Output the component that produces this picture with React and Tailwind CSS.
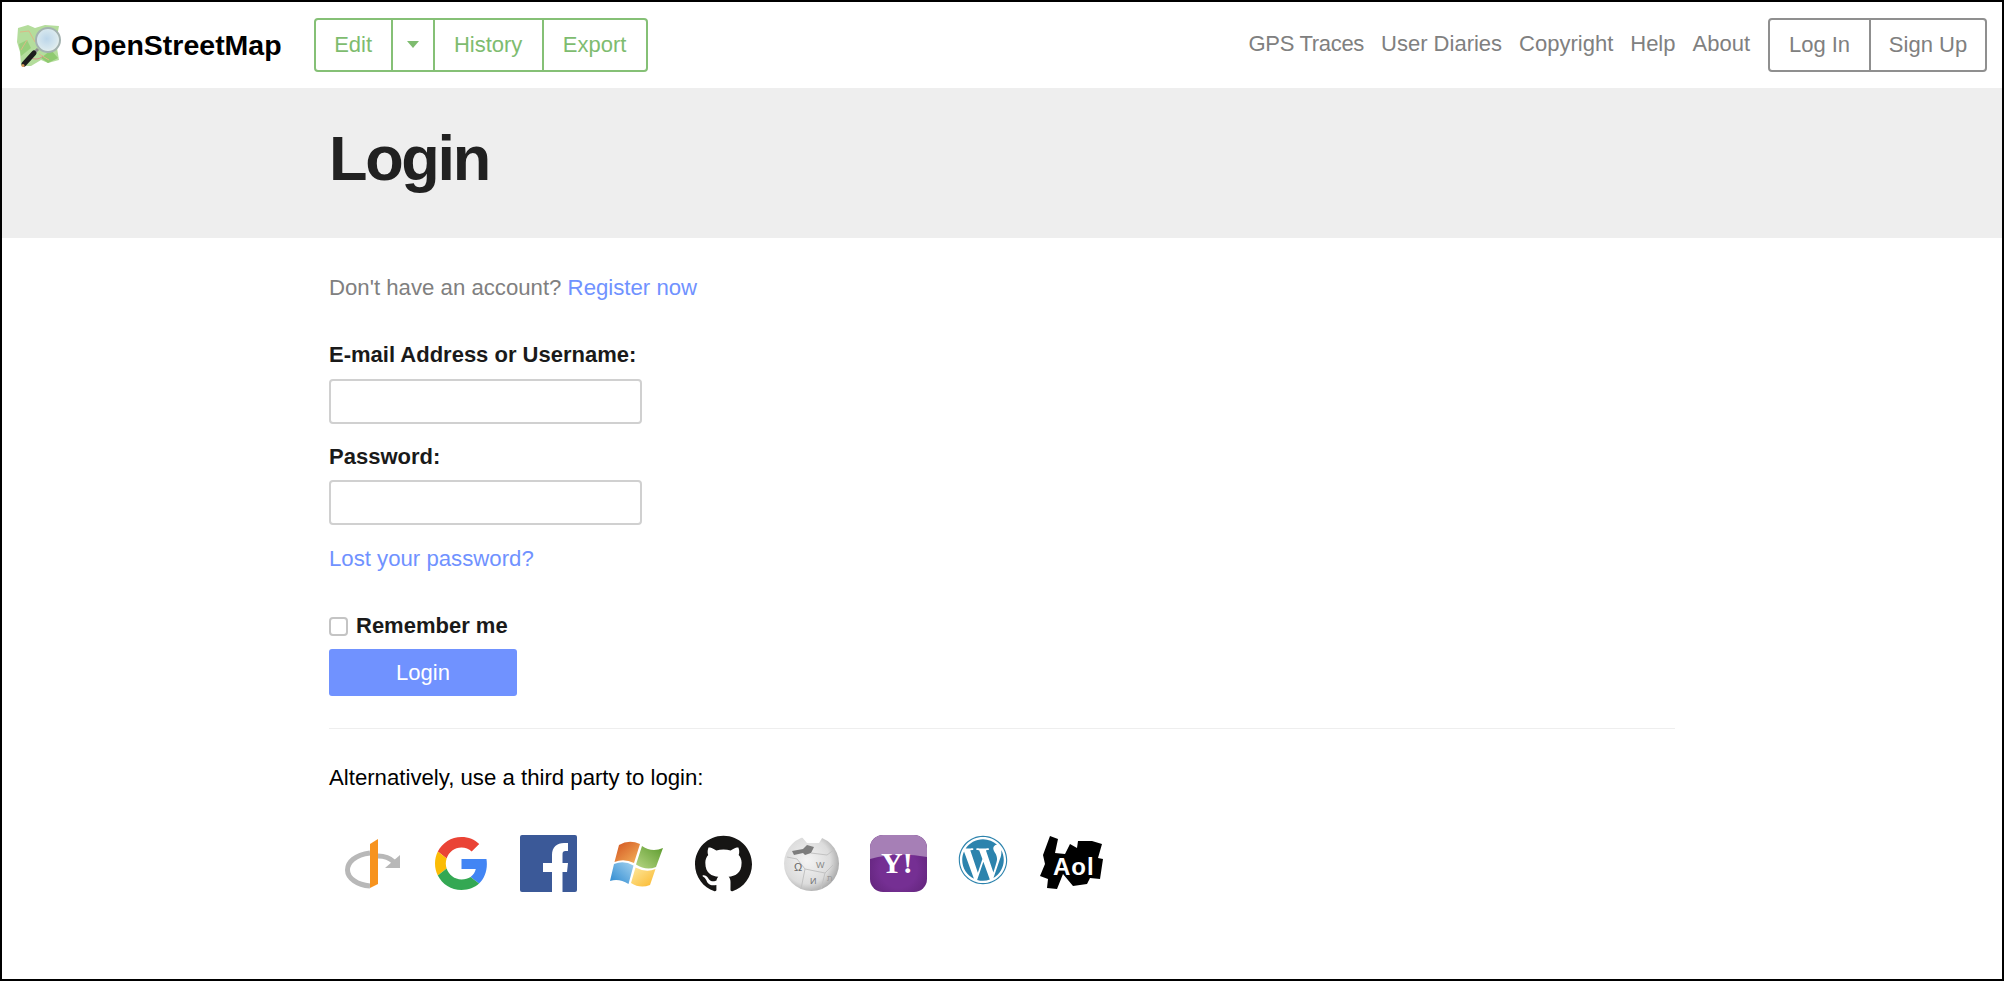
import { SiGithub } from 'react-icons/si';
import { FaWordpress } from 'react-icons/fa';

const font = { fontFamily: '"Liberation Sans", Arial, sans-serif' };

const OsmLogo = () => (
  <svg width="46" height="46" viewBox="0 0 46 46">
    <defs>
      <radialGradient id="lens" cx="45%" cy="45%" r="60%">
        <stop offset="0%" stopColor="#bcd6ea" />
        <stop offset="70%" stopColor="#d8e8ee" />
        <stop offset="100%" stopColor="#eef4ee" />
      </radialGradient>
    </defs>
    <path d="M3 6 L13 3 L20 6 L30 3 L44 4 L41 20 L44 38 L33 41 L26 38 L16 44 L6 44 L5 30 L2 20 Z" fill="#b4dd9c" />
    <path d="M4 22 L12 18 L16 26 L6 34 Z" fill="#98cf7c" />
    <path d="M26 36 L36 28 L43 36 L33 41 Z" fill="#8fca70" />
    <path d="M5 10 L14 9 L20 20 M12 18 L6 28 M24 32 L34 38" fill="none" stroke="#dcb887" strokeWidth="1" />
    <path d="M14 34 C18 38 24 38 28 34" fill="none" stroke="#d98f8f" strokeWidth="1" />
    <circle cx="33" cy="18" r="12" fill="url(#lens)" stroke="#a3b2b0" strokeWidth="2" />
    <path d="M23 27 L20 30" stroke="#8a8a8a" strokeWidth="3" />
    <path d="M19 31 L9 42" stroke="#1c1c1c" strokeWidth="5" strokeLinecap="round" />
    <circle cx="8" cy="43.5" r="1.5" fill="#d9985a" />
  </svg>
);

const OpenIdIcon = () => (
  <svg width="57" height="57" viewBox="0 0 57 57">
    <path d="M25 18 C10 20 2.5 27 2.5 35 C2.5 43 12 50 25 51" fill="none" stroke="#b8b8b8" strokeWidth="5" />
    <path d="M33 21 C40 21 45 23 49 27" fill="none" stroke="#b8b8b8" strokeWidth="5" />
    <path d="M40 33 L55 33 L55 20 Z" fill="#b8b8b8" />
    <path d="M25 9 L33 4 L33 49 L25 53 Z" fill="#f7931e" />
  </svg>
);

const GoogleIcon = () => (
  <svg width="53" height="53" viewBox="0 0 48 48" className="mt-[2px] ml-[2px]">
    <path fill="#EA4335" d="M24 9.5c3.54 0 6.71 1.22 9.21 3.6l6.85-6.85C35.9 2.38 30.47 0 24 0 14.62 0 6.51 5.38 2.56 13.22l7.98 6.19C12.43 13.72 17.74 9.5 24 9.5z" />
    <path fill="#4285F4" d="M46.98 24.55c0-1.57-.15-3.09-.38-4.55H24v9.02h12.94c-.58 2.96-2.26 5.48-4.78 7.18l7.73 6c4.51-4.18 7.09-10.36 7.09-17.65z" />
    <path fill="#FBBC05" d="M10.53 28.59c-.48-1.45-.76-2.99-.76-4.59s.27-3.14.76-4.59l-7.98-6.19C.92 16.46 0 20.12 0 24c0 3.88.92 7.54 2.56 10.78l7.97-6.19z" />
    <path fill="#34A853" d="M24 48c6.48 0 11.93-2.13 15.89-5.81l-7.73-6c-2.15 1.45-4.92 2.3-8.16 2.3-6.26 0-11.57-4.22-13.47-9.91l-7.98 6.19C6.51 42.62 14.62 48 24 48z" />
  </svg>
);

const FacebookIcon = () => (
  <svg width="57" height="57" viewBox="0 0 57 57">
    <rect width="57" height="57" rx="2" fill="#3b5998" />
    <path d="M32 57 V37 H23 V28 H32 V20 C32 12 37 8 44 8 H48 V16 H45.5 C43 16 42.5 17 42.5 20 V28 H48 L47 37 H42.5 V57 Z" fill="#fff" />
  </svg>
);

const WindowsIcon = () => (
  <svg width="57" height="57" viewBox="0 0 57 57">
    <defs>
      <linearGradient id="winOrange" x1="0" y1="0" x2="1" y2="1">
        <stop offset="0%" stopColor="#d2521f" />
        <stop offset="100%" stopColor="#f4b45c" />
      </linearGradient>
      <linearGradient id="winGreen" x1="1" y1="0" x2="0" y2="1">
        <stop offset="0%" stopColor="#5b9a2c" />
        <stop offset="100%" stopColor="#b7d684" />
      </linearGradient>
      <linearGradient id="winBlue" x1="0" y1="1" x2="1" y2="0">
        <stop offset="0%" stopColor="#2a88d0" />
        <stop offset="100%" stopColor="#a3d2ef" />
      </linearGradient>
      <linearGradient id="winYellow" x1="1" y1="1" x2="0" y2="0">
        <stop offset="0%" stopColor="#fbb82c" />
        <stop offset="100%" stopColor="#fde9a0" />
      </linearGradient>
    </defs>
    <path d="M11 10 Q21 4 32 9 L26 28 Q16 23 6.5 27 Z" fill="url(#winOrange)" />
    <path d="M34 11 Q44 18 55 13 L48 32 Q38 36 28 29.5 Z" fill="url(#winGreen)" />
    <path d="M6 29 Q16 25 25.5 30.5 L20.5 49 Q11 43 2 46 Z" fill="url(#winBlue)" />
    <path d="M27.5 32.5 Q38 38 47.5 34 L42 50 Q32 54 23 48 Z" fill="url(#winYellow)" />
  </svg>
);

const WikipediaIcon = () => (
  <svg width="57" height="57" viewBox="0 0 57 57">
    <defs>
      <radialGradient id="globe" cx="42%" cy="45%" r="60%">
        <stop offset="0%" stopColor="#f4f4f4" />
        <stop offset="70%" stopColor="#dcdcdc" />
        <stop offset="100%" stopColor="#a9a9a9" />
      </radialGradient>
    </defs>
    <circle cx="28.5" cy="28.5" r="27.5" fill="url(#globe)" />
    <path d="M18 1 L24 8 L36 8 L41 0 Z" fill="#fff" />
    <path d="M9 16 L20 14 L24 10 L31 12 L28 18 L22 20 L20 18 L11 20 Z" fill="#7d7d7d" />
    <path d="M4 22 L14 24 L22 34 L18 54 M28 18 L44 20 L52 14 M22 34 L42 38 L50 30 M42 38 L38 54" fill="none" stroke="#c2c2c2" strokeWidth="1" />
    <text x="11" y="36" fontSize="11" fill="#666" style={font}>Ω</text>
    <text x="33" y="33" fontSize="9" fill="#888" style={font}>W</text>
    <text x="27" y="49" fontSize="9" fill="#777" style={font}>И</text>
    <text x="44" y="46" fontSize="8" fill="#999" style={font}>ת</text>
  </svg>
);

const YahooIcon = () => (
  <svg width="57" height="57" viewBox="0 0 57 57">
    <defs>
      <radialGradient id="yahoo" cx="50%" cy="60%" r="65%">
        <stop offset="50%" stopColor="#752f93" />
        <stop offset="100%" stopColor="#5f2378" />
      </radialGradient>
    </defs>
    <rect width="57" height="57" rx="13" fill="url(#yahoo)" />
    <path d="M0 13 A13 13 0 0 1 13 0 H44 A13 13 0 0 1 57 13 V22 Q28 16 0 24 Z" fill="#a67fb6" />
    <text x="11" y="38" fontSize="30" fontWeight="700" fill="#fff" style={{ fontFamily: '"Liberation Serif", serif' }}>Y!</text>
  </svg>
);

const AolIcon = () => (
  <svg width="64" height="57" viewBox="0 0 64 57" className="-ml-[5px]">
    <path d="M10 1 L18 4 L15 18 L25 19 L30 9 L37 13 L38 6 L52 6 L62 9 L58 23 L63 24 L60 44 L50 43 L47 49 L33 51 L23 39 L17 54 L7 53 L8 44 L0 41 L5 29 L3 20 Z" fill="#000" />
    <text x="13" y="40" fontSize="24" fontWeight="700" letterSpacing="1" fill="#fff" style={font}>Aol</text>
  </svg>
);

const ProviderIcons = () => (
  <div className="flex gap-[30.5px] pl-[16px]">
    <div className="h-[57px] w-[57px]"><OpenIdIcon /></div>
    <div className="h-[57px] w-[57px]"><GoogleIcon /></div>
    <div className="h-[57px] w-[57px]"><FacebookIcon /></div>
    <div className="h-[57px] w-[57px]"><WindowsIcon /></div>
    <div className="h-[57px] w-[57px]"><SiGithub className="text-[57px] text-[#161514]" /></div>
    <div className="h-[57px] w-[57px]"><WikipediaIcon /></div>
    <div className="h-[57px] w-[57px]"><YahooIcon /></div>
    <div className="h-[57px] w-[57px]"><FaWordpress className="text-[50px] text-[#2c83ad]" /></div>
    <div className="h-[57px] w-[57px]"><AolIcon /></div>
  </div>
);

const App = () => {
  return (
    <div className="h-[981px] border-2 border-black bg-white" style={font}>
      {/* Header */}
      <header className="flex h-[86px] items-center pr-[15px] pl-[13px]">
        <OsmLogo />
        <span className="ml-[10px] text-[28.5px] font-bold text-black">OpenStreetMap</span>
        <div className="ml-[32px] flex h-[54px] rounded border-2 border-[#85c076] pb-[2px] text-[22px] text-[#7ebc6f]">
          <span className="flex w-[75px] items-center justify-center">Edit</span>
          <span className="-mb-[2px] flex w-[42px] items-center justify-center border-l-2 border-[#85c076] pb-[2px]">
            <span className="h-0 w-0 border-x-[6px] border-t-[7px] border-x-transparent border-t-[#7ebc6f]" />
          </span>
          <span className="-mb-[2px] flex w-[109px] items-center justify-center border-l-2 border-[#85c076] pb-[2px]">History</span>
          <span className="-mb-[2px] flex w-[104px] items-center justify-center border-l-2 border-[#85c076] pb-[2px]">Export</span>
        </div>
        <nav className="ml-auto flex gap-[17px] pb-[4px] text-[22px] text-[#808080]">
          <span className="tracking-[-0.3px]">GPS Traces</span>
          <span>User Diaries</span>
          <span>Copyright</span>
          <span>Help</span>
          <span>About</span>
        </nav>
        <div className="ml-[18px] flex h-[54px] rounded border-2 border-[#8f8f8f] text-[22px] text-[#808080]">
          <span className="flex w-[99px] items-center justify-center pb-[2px]">Log In</span>
          <span className="flex w-[116px] items-center justify-center border-l-2 border-[#8f8f8f] pb-[2px]">Sign Up</span>
        </div>
      </header>

      {/* Title band */}
      <div className="flex h-[150px] items-center bg-[#eeeeee] pb-[10px] pl-[327px]">
        <h1 className="text-[63px] font-bold tracking-[-2.3px] text-[#212121]">Login</h1>
      </div>

      {/* Form */}
      <main className="w-[1673px] pt-[35px] pl-[327px] text-[22px] leading-[30px]">
        <p className="text-[22.2px] text-[#808080]">
          Don't have an account? <span className="text-[#7092ff]">Register now</span>
        </p>

        <label className="mt-[37px] block font-bold text-[#1a1a1a]">E-mail Address or Username:</label>
        <input className="mt-[9px] block h-[45px] w-[313px] rounded border-2 border-[#d0d0d0] bg-white" />
        <label className="mt-[18px] block font-bold text-[#1a1a1a]">Password:</label>
        <input className="mt-[8px] block h-[45px] w-[313px] rounded border-2 border-[#d0d0d0] bg-white" />
        <p className="mt-[19px] text-[22.2px] text-[#7092ff]">Lost your password?</p>

        <label className="mt-[37px] flex items-center font-bold text-[#1a1a1a]">
          <span className="mr-[8px] h-[19px] w-[19px] rounded-[4px] border-2 border-[#c4c4c4] bg-white" />
          Remember me
        </label>
        <button className="mt-[8px] block h-[47px] w-[188px] rounded-[3px] bg-[#7092ff] text-white">Login</button>

        <hr className="mt-[32px] border-[#eeeeee]" />

        <p className="mt-[34px] text-[22.2px] text-black">Alternatively, use a third party to login:</p>
        <div className="mt-[42px]">
          <ProviderIcons />
        </div>
      </main>
    </div>
  );
};

export default App;
